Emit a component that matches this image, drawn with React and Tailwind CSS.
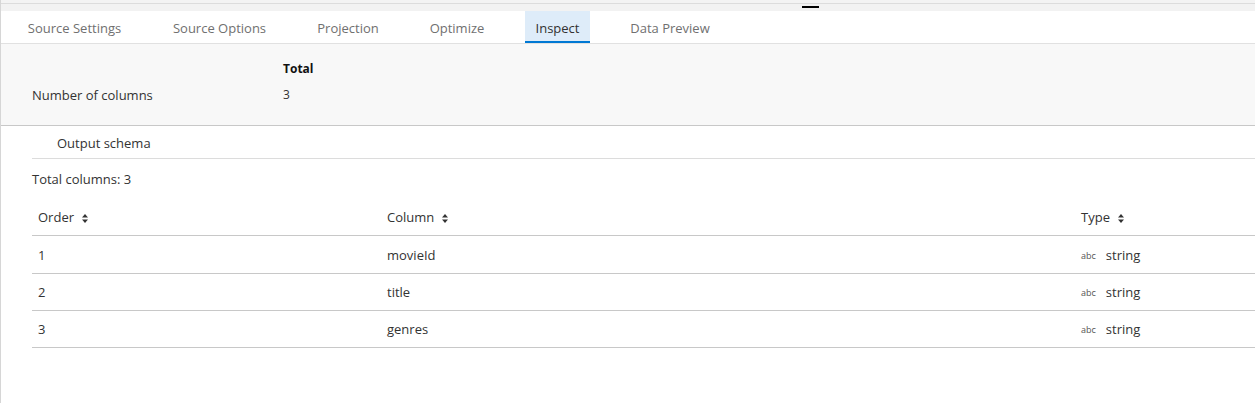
import React from 'react';

const tabs = [
    { label: 'Source Settings', w: 'w-[115px]' },
    { label: 'Source Options', w: 'w-[115px]' },
    { label: 'Projection', w: 'w-[82px]' },
    { label: 'Optimize', w: 'w-[76px]' },
    { label: 'Inspect', w: 'w-[65px]', active: true },
    { label: 'Data Preview', w: 'w-[100px]' },
];

const rows = [
    { order: 1, column: 'movieId', type: 'string' },
    { order: 2, column: 'title', type: 'string' },
    { order: 3, column: 'genres', type: 'string' },
];

function SortIcon() {
    return (
        <svg width="6" height="9" viewBox="0 0 6 9" className="ml-[8px]">
            <path d="M3 0 L6 3.5 L0 3.5 Z" fill="#333" />
            <path d="M3 9 L6 5.5 L0 5.5 Z" fill="#333" />
        </svg>
    );
}

function App() {
    return (
        <div className="w-[1255px] h-[403px] overflow-hidden bg-white text-[13px] text-[#333] border-l border-[#d6d6d6]" style={{ fontFamily: '"Segoe UI", "Open Sans", "Noto Sans", sans-serif' }}>
            <div className="h-[4px] bg-[#f3f3f3] border-b border-[#dcdcdc]" />
            <div className="h-[7px] bg-[#f2f2f2] relative">
                <div className="absolute left-[801px] top-[2px] w-[17px] h-[2px] bg-black" />
            </div>
            <div className="flex h-[33px] border-b border-[#e1e1e1] pl-[16px] gap-[30px]">
                {tabs.map(t => (
                    <div key={t.label} className={`${t.w} flex items-start pt-[8px] justify-center whitespace-nowrap ${t.active ? 'bg-[#deecf9] text-[#323130] border-b-2 border-[#0078d4]' : 'text-[#707070]'}`}>
                        {t.label}
                    </div>
                ))}
            </div>
            <div className="h-[82px] bg-[#f8f8f8] border-b border-[#c8c8c8] relative">
                <div className="absolute left-[282px] top-[16px] font-bold text-[#111] text-[12px]">Total</div>
                <div className="absolute left-[31px] top-[42px]">Number of columns</div>
                <div className="absolute left-[282px] top-[42px] text-[12px]">3</div>
            </div>
            <div className="pl-[31px]">
                <div className="h-[33px] flex items-center pt-[3px] pl-[25px] border-b border-[#dcdcdc]">Output schema</div>
                <div className="h-[42px] flex items-center">Total columns: 3</div>
                <div className="grid grid-cols-[349px_694px_1fr]">
                    <div className="h-[35px] flex items-center pl-[6px] border-b border-[#c8c8c8]">Order<SortIcon /></div>
                    <div className="h-[35px] flex items-center pl-[6px] border-b border-[#c8c8c8]">Column<SortIcon /></div>
                    <div className="h-[35px] flex items-center pl-[6px] border-b border-[#c8c8c8]">Type<SortIcon /></div>
                    {rows.map((r, i) => (
                        <React.Fragment key={r.order}>
                            <div className={`${i === 0 ? 'h-[38px]' : 'h-[37px]'} flex items-center pt-[2px] pl-[6px] border-b border-[#c8c8c8]`}>{r.order}</div>
                            <div className={`${i === 0 ? 'h-[38px]' : 'h-[37px]'} flex items-center pt-[2px] pl-[6px] border-b border-[#c8c8c8]`}>{r.column}</div>
                            <div className={`${i === 0 ? 'h-[38px]' : 'h-[37px]'} flex items-center pt-[2px] pl-[6px] border-b border-[#c8c8c8]`}>
                                <span className="text-[9px] text-[#555] mr-[10px]">abc</span>{r.type}
                            </div>
                        </React.Fragment>
                    ))}
                </div>
            </div>
        </div>
    );
}

export default App;
